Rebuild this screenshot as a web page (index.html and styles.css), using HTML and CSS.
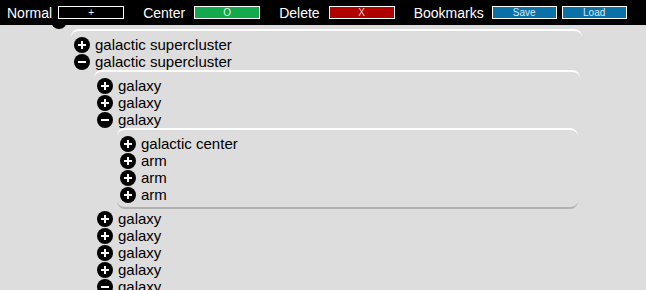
FILE: index.html
```html
<!DOCTYPE html>
<html>

<head>
    <meta charset="utf-8">
    <meta name="viewport" content="width=device-width, initial-scale=1">
    <title>Universe Tree</title>
    <link rel="stylesheet" href="styles.css">
</head>

<body>
    <div class="toolbar">
        <span class="tool-label">Normal</span>
        <span class="mode normal">+</span>
        <span class="tool-label gap">Center</span>
        <span class="mode center">O</span>
        <span class="tool-label gap">Delete</span>
        <span class="mode delete">X</span>
        <span class="tool-label gap">Bookmarks</span>
        <span class="mode mark">Save</span>
        <span class="mode mark load">Load</span>
    </div>

    <div class="tree">
        <div class="node">
            <div class="row"><span class="toggle minus"></span></div>
            <div class="kids">
                <div class="row"><span class="toggle plus"></span><span class="label">galactic supercluster</span></div>
                <div class="node">
                    <div class="row"><span class="toggle minus"></span><span class="label">galactic supercluster</span></div>
                    <div class="kids">
                        <div class="row"><span class="toggle plus"></span><span class="label">galaxy</span></div>
                        <div class="row"><span class="toggle plus"></span><span class="label">galaxy</span></div>
                        <div class="node">
                            <div class="row"><span class="toggle minus"></span><span class="label">galaxy</span></div>
                            <div class="kids">
                                <div class="row"><span class="toggle plus"></span><span class="label">galactic center</span></div>
                                <div class="row"><span class="toggle plus"></span><span class="label">arm</span></div>
                                <div class="row"><span class="toggle plus"></span><span class="label">arm</span></div>
                                <div class="row"><span class="toggle plus"></span><span class="label">arm</span></div>
                            </div>
                        </div>
                        <div class="row"><span class="toggle plus"></span><span class="label">galaxy</span></div>
                        <div class="row"><span class="toggle plus"></span><span class="label">galaxy</span></div>
                        <div class="row"><span class="toggle plus"></span><span class="label">galaxy</span></div>
                        <div class="row"><span class="toggle plus"></span><span class="label">galaxy</span></div>
                        <div class="row"><span class="toggle minus"></span><span class="label">galaxy</span></div>
                    </div>
                </div>
            </div>
        </div>
    </div>
</body>

</html>
```

FILE: styles.css
```css
body {
    margin: 0;
    background-color: #dddddd;
    font-family: "Liberation Sans", Arial, sans-serif;
}

.toolbar {
    position: fixed;
    top: 0;
    left: 0;
    right: 0;
    height: 25px;
    background-color: black;
    display: flex;
    align-items: center;
    padding-left: 7px;
    z-index: 2;
}

.tool-label {
    color: white;
    font-size: 14px;
}

.tool-label.gap {
    margin-left: 19px;
}

.mode {
    box-sizing: border-box;
    width: 66px;
    height: 13px;
    margin-left: 9px;
    border: 1px solid white;
    color: white;
    font-size: 10px;
    line-height: 11px;
    text-align: center;
}

.normal {
    margin-left: 6px;
    background-color: black;
}

.center {
    background-color: #14a94f;
    color: #dff5e6;
}

.delete {
    background-color: #b00000;
    color: #f4d0d0;
}

.mark {
    width: 65px;
    margin-left: 8px;
    background-color: #0a70a8;
    color: #d6ebf5;
}

.mark.load {
    margin-left: 5px;
}

.tree {
    width: 531px;
    padding: 12px 0 0 51px;
}

.row {
    display: flex;
    align-items: center;
    height: 17px;
}

.toggle {
    position: relative;
    flex: none;
    width: 16px;
    height: 16px;
    border-radius: 50%;
    background-color: black;
    margin-right: 5px;
}

.toggle::before,
.plus::after {
    content: "";
    position: absolute;
    background-color: white;
}

.toggle::before {
    left: 4px;
    top: 7px;
    width: 8px;
    height: 2px;
}

.plus::after {
    left: 7px;
    top: 4px;
    width: 2px;
    height: 8px;
}

.label {
    font-size: 15px;
    color: black;
}

.kids {
    margin: 0 0 1px 20px;
    padding: 5px 2px 4px 3px;
    border-top: 2px solid white;
    border-bottom: 2px solid #b2b2b2;
    border-radius: 8px;
}
```
